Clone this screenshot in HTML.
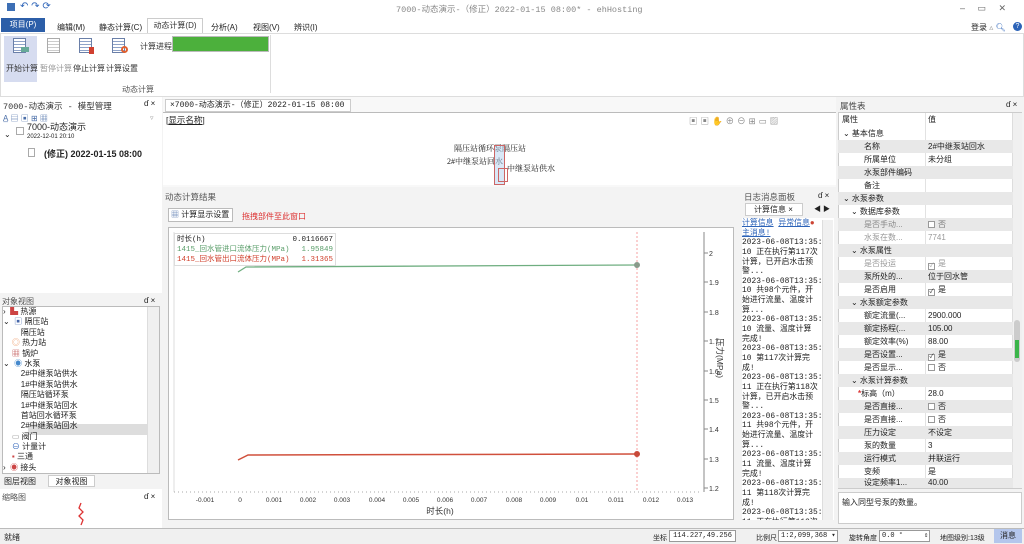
<!DOCTYPE html>
<html><head><meta charset="utf-8">
<style>
*{margin:0;padding:0;box-sizing:border-box}
body{width:1024px;height:544px;overflow:hidden;background:#f3f3f3;font-family:"Liberation Sans","Noto Sans CJK SC",sans-serif;font-size:8px;color:#222;position:relative}
.a{position:absolute;white-space:nowrap}
.box{position:absolute;background:#fff}
.lg{font-family:"Liberation Mono","Noto Sans CJK SC",monospace;font-size:7.9px}
.lg div{height:9.65px;line-height:9.65px;white-space:pre;overflow:visible}
.tr div{height:10.4px;line-height:10.4px;white-space:pre}
.row{position:absolute;left:838px;width:175px;height:13px;font-size:8px;line-height:13px}
.row span{position:absolute}
.g{background:#e8e8e8}
.cb{display:inline-block;width:7px;height:7px;border:1px solid #999;vertical-align:-1px;margin-right:3px;background:#fff;font-size:6px;line-height:5px;text-align:center;font-style:normal}
.st{font-size:7px}
</style></head><body>
<!-- title bar -->
<div class="box" style="left:0;top:0;width:1024px;height:17px;background:#fff"></div>
<div class="a" style="left:7px;top:3px;width:8px;height:8px;background:#3d6fb5"></div>
<div class="a" style="left:20px;top:1px;font-size:10px;color:#2c63b8">↶ ↷ ⟳</div>
<div class="a" style="left:396px;top:3px;font-size:8.5px;color:#888;font-family:'Liberation Mono','Noto Sans CJK SC',monospace">7000-动态演示-（修正）2022-01-15 08:00* - ehHosting</div>
<div class="a" style="left:960px;top:3px;font-size:9px;color:#666">–&nbsp;&nbsp;&nbsp;&nbsp;&nbsp;▭&nbsp;&nbsp;&nbsp;&nbsp;&nbsp;✕</div>
<!-- tab row -->
<div class="box" style="left:0;top:17px;width:1024px;height:17px;background:#fff"></div>
<div class="a" style="left:1px;top:18px;width:44px;height:14px;background:#2c5ea8;color:#fff;font-size:8px;line-height:14px;text-align:center">项目(P)</div>
<div class="a" style="left:57px;top:22px">编辑(M)</div>
<div class="a" style="left:99px;top:22px">静态计算(C)</div>
<div class="a" style="left:147px;top:18px;width:56px;height:16px;border:1px solid #ccc;border-bottom:none;background:#fff;text-align:center;line-height:14px;color:#333">动态计算(D)</div>
<div class="a" style="left:211px;top:22px">分析(A)</div>
<div class="a" style="left:253px;top:22px">视图(V)</div>
<div class="a" style="left:294px;top:22px">辨识(I)</div>
<div class="a" style="left:971px;top:22px;font-size:8px">登录 <span style="color:#999">▵</span> <span style="color:#2c63b8">🔍︎</span></div>
<div class="a" style="left:1013px;top:22px;width:9px;height:9px;border-radius:50%;background:#2c63b8;color:#fff;font-size:7px;line-height:9px;text-align:center">?</div>
<!-- ribbon -->
<div class="box" style="left:0;top:33px;width:1024px;height:64px;border:1px solid #ddd"></div>
<div class="a" style="left:4px;top:36px;width:33px;height:46px;background:#d6dcf0"></div>
<div class="a" style="left:13px;top:38px;width:13px;height:15px;border:1px solid #6a7fa8;background:repeating-linear-gradient(#fff 0 2px,#8fa3c8 2px 3px)"></div>
<div class="a" style="left:21px;top:47px;width:8px;height:5px;background:#6a9"></div>
<div class="a" style="left:47px;top:38px;width:13px;height:15px;border:1px solid #aaa;background:repeating-linear-gradient(#fff 0 2px,#ccc 2px 3px)"></div>
<div class="a" style="left:79px;top:38px;width:13px;height:15px;border:1px solid #6a7fa8;background:repeating-linear-gradient(#fff 0 2px,#8fa3c8 2px 3px)"></div>
<div class="a" style="left:89px;top:47px;width:5px;height:7px;background:#d04030"></div>
<div class="a" style="left:112px;top:38px;width:13px;height:15px;border:1px solid #6a7fa8;background:repeating-linear-gradient(#fff 0 2px,#8fa3c8 2px 3px)"></div>
<div class="a" style="left:121px;top:46px;width:7px;height:7px;border:2px solid #e06030;border-radius:50%"></div>
<div class="a" style="left:6px;top:63px;color:#333">开始计算</div>
<div class="a" style="left:40px;top:63px;color:#999">暂停计算</div>
<div class="a" style="left:73px;top:63px;color:#333">停止计算</div>
<div class="a" style="left:106px;top:63px;color:#333">计算设置</div>
<div class="a" style="left:140px;top:41px;color:#333">计算进程:</div>
<div class="a" style="left:172px;top:36px;width:97px;height:16px;background:#4cb03c;border:1px solid #bbb"></div>
<div class="a" style="left:122px;top:84px;color:#555">动态计算</div>
<div class="a" style="left:270px;top:35px;width:1px;height:58px;background:#ddd"></div>
<!-- left model panel -->
<div class="box" style="left:0;top:97px;width:162px;height:196px"></div>
<div class="a" style="left:3px;top:100px;font-family:'Liberation Mono','Noto Sans CJK SC',monospace;font-size:8.5px;color:#333">7000-动态演示 - 模型管理</div>
<div class="a" style="left:144px;top:99px;font-size:8px">ɗ ×</div>
<div class="a" style="left:3px;top:113px;font-size:8px;color:#4a6ea8">A̲ ▤ ▣ ⊞ ▦</div>
<div class="a" style="left:150px;top:114px;font-size:7px;color:#999">▿</div>
<div class="a" style="left:4px;top:130px;font-size:8px">⌄</div>
<div class="a" style="left:16px;top:127px;width:8px;height:8px;border:1px solid #aaa"></div>
<div class="a" style="left:27px;top:122px;font-size:9px;line-height:11px">7000-动态演示</div>
<div class="a" style="left:27px;top:134px;font-size:6px;line-height:7px">2022-12-01 20:10</div>
<div class="a" style="left:28px;top:148px;width:7px;height:9px;border:1px solid #aaa"></div>
<div class="a" style="left:44px;top:147px;font-size:9px;font-weight:bold">(修正) 2022-01-15 08:00</div>
<!-- object panel -->
<div class="box" style="left:0;top:294px;width:162px;height:194px;background:#f3f3f3"></div>
<div class="a" style="left:2px;top:296px;color:#555">对象视图</div>
<div class="a" style="left:144px;top:296px">ɗ ×</div>
<div class="box" style="left:2px;top:306px;width:158px;height:168px;border:1px solid #bbb"></div>
<div class="a" style="left:147px;top:307px;width:12px;height:166px;background:#f0f0f0;border-left:1px solid #ddd"></div>
<div class="a" style="left:28px;top:424px;width:120px;height:11px;background:#ddd"></div>
<div class="a tr" style="left:3px;top:307px;font-size:8px;color:#222">
<div>›  <span style="color:#c44">▙</span> 热源</div>
<div>⌄  <span style="color:#46a">▣</span> 隔压站</div>
<div>        隔压站</div>
<div>    <span style="color:#e96">◎</span> 热力站</div>
<div>    <span style="color:#b44">▦</span> 锅炉</div>
<div>⌄  <span style="color:#48c">◉</span> 水泵</div>
<div>        2#中继泵站供水</div>
<div>        1#中继泵站供水</div>
<div>        隔压站循环泵</div>
<div>        1#中继泵站回水</div>
<div>        首站回水循环泵</div>
<div>        2#中继泵站回水</div>
<div>    <span style="color:#999">▭</span> 阀门</div>
<div>    <span style="color:#36b">⊖</span> 计量计</div>
<div>    <span style="color:#c44">▪</span> 三通</div>
<div>›  <span style="color:#c44">◉</span> 接头</div>
</div>
<div class="a" style="left:4px;top:476px;color:#222">图层视图</div>
<div class="a" style="left:48px;top:475px;width:47px;height:12px;background:#fff;border:1px solid #ccc;text-align:center;line-height:11px">对象视图</div>
<div class="box" style="left:0;top:489px;width:162px;height:39px"></div>
<div class="a" style="left:2px;top:492px;color:#555">缩略图</div>
<div class="a" style="left:144px;top:492px">ɗ ×</div>
<svg class="a" style="left:74px;top:502px" width="14" height="24"><path d="M7 1 L5 6 L9 10 L5 14 L9 18 L7 23" stroke="#d33" fill="none" stroke-width="1.3"/></svg>
<!-- document tab & canvas -->
<div class="box" style="left:163px;top:97px;width:673px;height:90px;background:#f8f8f8"></div>
<div class="a" style="left:165px;top:99px;width:186px;height:13px;background:#fff;border:1px solid #ccc;font-family:'Liberation Mono','Noto Sans CJK SC',monospace;font-size:8px;line-height:11px;padding-left:4px">×7000-动态演示-（修正）2022-01-15 08:00</div>
<div class="box" style="left:163px;top:112px;width:673px;height:73px;border-top:1px solid #bbb"></div>
<div class="a" style="left:166px;top:114px;font-size:8.5px">[<u>显示名称</u>]</div>
<div class="a" style="left:689px;top:115px;font-size:8.5px;color:#888;letter-spacing:3px">▣▣✋⊕⊖⊞▭▨</div>
<div class="a" style="left:454px;top:143px;font-size:8px;font-family:'Liberation Serif','Noto Serif CJK SC',serif">隔压站循环泵隔压站</div>
<div class="a" style="left:447px;top:156px;font-size:8px;font-family:'Liberation Serif','Noto Serif CJK SC',serif">2#中继泵站回水</div>
<div class="a" style="left:507px;top:163px;font-size:8px;font-family:'Liberation Serif','Noto Serif CJK SC',serif">中继泵站供水</div>
<div class="a" style="left:494px;top:145px;width:11px;height:40px;border:1px solid #c66;background:rgba(180,210,240,.5)"></div>
<div class="a" style="left:498px;top:168px;width:10px;height:14px;border:1px solid #c66"></div>
<!-- results pane -->
<div class="box" style="left:163px;top:187px;width:575px;height:341px;background:#f3f3f3"></div>
<div class="a" style="left:165px;top:191px;color:#555;font-size:8.5px">动态计算结果</div>
<div class="a" style="left:168px;top:208px;width:65px;height:14px;background:#fff;border:1px solid #bbb;line-height:12px;padding-left:2px"><span style="color:#4a6ea8">▦</span> 计算显示设置</div>
<div class="a" style="left:242px;top:211px;color:#d33">拖拽部件至此窗口</div>
<div class="box" style="left:168px;top:227px;width:566px;height:293px;border:1px solid #bbb"></div>
<svg class="a" style="left:0;top:0" width="1024" height="544">
 <line x1="174" y1="232" x2="174" y2="492" stroke="#ddd"/>
 <line x1="174" y1="492" x2="700" y2="492" stroke="#aaa" stroke-dasharray="1 3"/>
 <line x1="704" y1="232" x2="704" y2="492" stroke="#888"/>
 <g stroke="#888">
 <line x1="704" y1="253" x2="708" y2="253"/><line x1="704" y1="282" x2="708" y2="282"/><line x1="704" y1="312" x2="708" y2="312"/><line x1="704" y1="341" x2="708" y2="341"/><line x1="704" y1="371" x2="708" y2="371"/><line x1="704" y1="400" x2="708" y2="400"/><line x1="704" y1="429" x2="708" y2="429"/><line x1="704" y1="459" x2="708" y2="459"/><line x1="704" y1="488" x2="708" y2="488"/>
 </g>
 <g font-size="7" fill="#333" font-family="Liberation Sans">
 <text x="709" y="256">2</text><text x="709" y="285">1.9</text><text x="709" y="315">1.8</text><text x="709" y="344">1.7</text><text x="709" y="374">1.6</text><text x="709" y="403">1.5</text><text x="709" y="432">1.4</text><text x="709" y="462">1.3</text><text x="709" y="491">1.2</text>
 </g>
 <g font-size="6.5" fill="#333" font-family="Liberation Sans" text-anchor="middle">
 <text x="205" y="502">-0.001</text><text x="240" y="502">0</text><text x="274" y="502">0.001</text><text x="308" y="502">0.002</text><text x="342" y="502">0.003</text><text x="377" y="502">0.004</text><text x="411" y="502">0.005</text><text x="445" y="502">0.006</text><text x="479" y="502">0.007</text><text x="514" y="502">0.008</text><text x="548" y="502">0.009</text><text x="582" y="502">0.01</text><text x="616" y="502">0.011</text><text x="651" y="502">0.012</text><text x="685" y="502">0.013</text>
 </g>
 <text x="440" y="514" font-size="8.5" text-anchor="middle" fill="#333" font-family="Liberation Sans,Noto Sans CJK SC">时长(h)</text>
 <text x="0" y="0" font-size="8.5" fill="#333" font-family="Liberation Sans,Noto Sans CJK SC" transform="translate(717,338) rotate(90)">压力(MPa)</text>
 <line x1="637" y1="232" x2="637" y2="492" stroke="#f4a0a0" stroke-dasharray="2 2"/>
 <polyline points="238,272 246,267 637,265" fill="none" stroke="#6fae80" stroke-width="1.3"/>
 <circle cx="637" cy="265" r="3" fill="#8a9a8a"/>
 <polyline points="238,460 248,455 637,454" fill="none" stroke="#d0503c" stroke-width="1.5"/>
 <circle cx="637" cy="454" r="3" fill="#c84a3a"/>
</svg>
<div class="a" style="left:174px;top:233px;width:162px;height:33px;background:#fff;border:1px solid #ddd;font-family:'Liberation Mono','Noto Sans CJK SC',monospace;font-size:7.5px;line-height:10px;padding:1px 2px">
<div>时长(h)<span style="float:right">0.0116667</span></div>
<div style="color:#5a9e6a">1415_回水管进口流体压力(MPa)<span style="float:right">1.95849</span></div>
<div style="color:#d0402c">1415_回水管出口流体压力(MPa)<span style="float:right">1.31365</span></div>
</div>
<!-- log pane -->
<div class="box" style="left:739px;top:187px;width:97px;height:341px;background:#f3f3f3"></div>
<div class="a" style="left:744px;top:191px;color:#555;font-size:8.5px">日志消息面板</div>
<div class="a" style="left:818px;top:191px">ɗ ×</div>
<div class="a" style="left:745px;top:203px;width:58px;height:13px;background:#fff;border:1px solid #ccc;line-height:11px;padding-left:8px">计算信息 ×</div>
<div class="a" style="left:814px;top:204px;font-size:7px">◀ ▶</div>
<div class="box" style="left:742px;top:218px;width:92px;height:302px;overflow:hidden">
<div class="lg" style="position:absolute;left:0;top:1px;color:#222">
<div><span style="color:#2c63b8"><u>计算信息</u> <u>异常信息</u></span><span style="color:#c43">●</span></div>
<div><span style="color:#2c63b8"><u>主消息!</u></span></div>
<div>2023-06-08T13:35:</div>
<div>10 正在执行第117次</div>
<div>计算，已开启水击预</div>
<div>警...</div>
<div>2023-06-08T13:35:</div>
<div>10 共98个元件，开</div>
<div>始进行流量、温度计</div>
<div>算...</div>
<div>2023-06-08T13:35:</div>
<div>10 流量、温度计算</div>
<div>完成!</div>
<div>2023-06-08T13:35:</div>
<div>10 第117次计算完</div>
<div>成!</div>
<div>2023-06-08T13:35:</div>
<div>11 正在执行第118次</div>
<div>计算，已开启水击预</div>
<div>警...</div>
<div>2023-06-08T13:35:</div>
<div>11 共98个元件，开</div>
<div>始进行流量、温度计</div>
<div>算...</div>
<div>2023-06-08T13:35:</div>
<div>11 流量、温度计算</div>
<div>完成!</div>
<div>2023-06-08T13:35:</div>
<div>11 第118次计算完</div>
<div>成!</div>
<div>2023-06-08T13:35:</div>
<div>11 正在执行第119次</div>
<div>计算，已开启水击预</div>
<div>警...</div>
</div></div>
<div class="a" style="left:822px;top:220px;width:11px;height:300px;background:#f0f0f0;border-left:1px solid #ddd"></div>
<!-- property panel -->
<div class="box" style="left:836px;top:97px;width:188px;height:431px;background:#f3f3f3"></div>
<div class="a" style="left:840px;top:100px;color:#444;font-size:8.5px">属性表</div>
<div class="a" style="left:1006px;top:100px">ɗ ×</div>
<div class="box" style="left:838px;top:112px;width:184px;height:377px;border:1px solid #ccc"></div>
<div class="a" style="left:1012px;top:113px;width:10px;height:375px;background:#f0f0f0;border-left:1px solid #ddd"></div>
<div class="a" style="left:1014px;top:320px;width:6px;height:42px;background:#ccc;border-radius:3px"></div>
<div class="a" style="left:1015px;top:340px;width:4px;height:18px;background:#3bb54a"></div>
<div class="a" style="left:925px;top:113px;width:1px;height:375px;background:#e2e2e2"></div>
<div class="row" style="top:113px"><span style="left:4px">属性</span><span style="left:90px">值</span></div>
<div class="row" style="top:127px"><span style="left:5px">⌄ 基本信息</span></div>
<div class="row g" style="top:140px"><span style="left:26px">名称</span><span style="left:90px">2#中继泵站回水</span></div>
<div class="row" style="top:153px"><span style="left:26px">所属单位</span><span style="left:90px">未分组</span></div>
<div class="row g" style="top:166px"><span style="left:26px">水泵部件编码</span></div>
<div class="row" style="top:179px"><span style="left:26px">备注</span></div>
<div class="row g" style="top:192px"><span style="left:5px">⌄ 水泵参数</span></div>
<div class="row" style="top:205px"><span style="left:13px">⌄ 数据库参数</span></div>
<div class="row g" style="top:218px"><span style="left:26px;color:#888">是否手动...</span><span style="left:90px;color:#777"><i class="cb"></i>否</span></div>
<div class="row" style="top:231px"><span style="left:26px;color:#999">水泵在数...</span><span style="left:90px;color:#999">7741</span></div>
<div class="row g" style="top:244px"><span style="left:13px">⌄ 水泵属性</span></div>
<div class="row" style="top:257px"><span style="left:26px;color:#999">是否投运</span><span style="left:90px;color:#999"><i class="cb">✓</i>是</span></div>
<div class="row g" style="top:270px"><span style="left:26px">泵所处的...</span><span style="left:90px">位于回水管</span></div>
<div class="row" style="top:283px"><span style="left:26px">是否启用</span><span style="left:90px"><i class="cb">✓</i>是</span></div>
<div class="row g" style="top:296px"><span style="left:13px">⌄ 水泵额定参数</span></div>
<div class="row" style="top:309px"><span style="left:26px">额定流量(...</span><span style="left:90px">2900.000</span></div>
<div class="row g" style="top:322px"><span style="left:26px">额定扬程(...</span><span style="left:90px">105.00</span></div>
<div class="row" style="top:335px"><span style="left:26px">额定效率(%)</span><span style="left:90px">88.00</span></div>
<div class="row g" style="top:348px"><span style="left:26px">是否设置...</span><span style="left:90px"><i class="cb">✓</i>是</span></div>
<div class="row" style="top:361px"><span style="left:26px">是否显示...</span><span style="left:90px"><i class="cb"></i>否</span></div>
<div class="row g" style="top:374px"><span style="left:13px">⌄ 水泵计算参数</span></div>
<div class="row" style="top:387px"><span style="left:20px"><b style="color:#d33">*</b>标高（m）</span><span style="left:90px">28.0</span></div>
<div class="row g" style="top:400px"><span style="left:26px">是否直接...</span><span style="left:90px"><i class="cb"></i>否</span></div>
<div class="row" style="top:413px"><span style="left:26px">是否直接...</span><span style="left:90px"><i class="cb"></i>否</span></div>
<div class="row g" style="top:426px"><span style="left:26px">压力设定</span><span style="left:90px">不设定</span></div>
<div class="row" style="top:439px"><span style="left:26px">泵的数量</span><span style="left:90px">3</span></div>
<div class="row g" style="top:452px"><span style="left:26px">运行模式</span><span style="left:90px">并联运行</span></div>
<div class="row" style="top:465px"><span style="left:26px">变频</span><span style="left:90px">是</span></div>
<div class="row g" style="top:478px;height:10px;overflow:hidden;line-height:10px"><span style="left:26px">设定频率1...</span><span style="left:90px">40.00</span></div>
<div class="box" style="left:838px;top:492px;width:184px;height:32px;border:1px solid #ccc;padding:4px 3px;font-size:8px">输入同型号泵的数量。</div>
<!-- status bar -->
<div class="box" style="left:0;top:528px;width:1024px;height:16px;background:#f0f0f0;border-top:1px solid #bbb"></div>
<div class="a" style="left:4px;top:532px">就绪</div>
<div class="a st" style="left:653px;top:533px">坐标</div>
<div class="a" style="left:669px;top:530px;width:67px;height:12px;border:1px solid #999;background:#fff;font-family:'Liberation Mono',monospace;font-size:7px;line-height:10px;text-align:center">114.227,49.256</div>
<div class="a st" style="left:756px;top:533px">比例尺</div>
<div class="a" style="left:778px;top:530px;width:60px;height:12px;border:1px solid #999;background:#fff;font-family:'Liberation Mono',monospace;font-size:7px;line-height:10px;padding-left:2px">1:2,099,368 ▾</div>
<div class="a st" style="left:849px;top:533px">旋转角度</div>
<div class="a" style="left:879px;top:530px;width:51px;height:12px;border:1px solid #999;background:#fff;font-family:'Liberation Mono',monospace;font-size:7px;line-height:10px;padding-left:2px">0.0 °&nbsp;&nbsp;&nbsp;&nbsp;&nbsp;⇕</div>
<div class="a st" style="left:940px;top:533px">地图级别:13级</div>
<div class="a" style="left:994px;top:529px;width:28px;height:14px;background:#b4c6ec;text-align:center;line-height:14px">消息</div>
</body></html>
